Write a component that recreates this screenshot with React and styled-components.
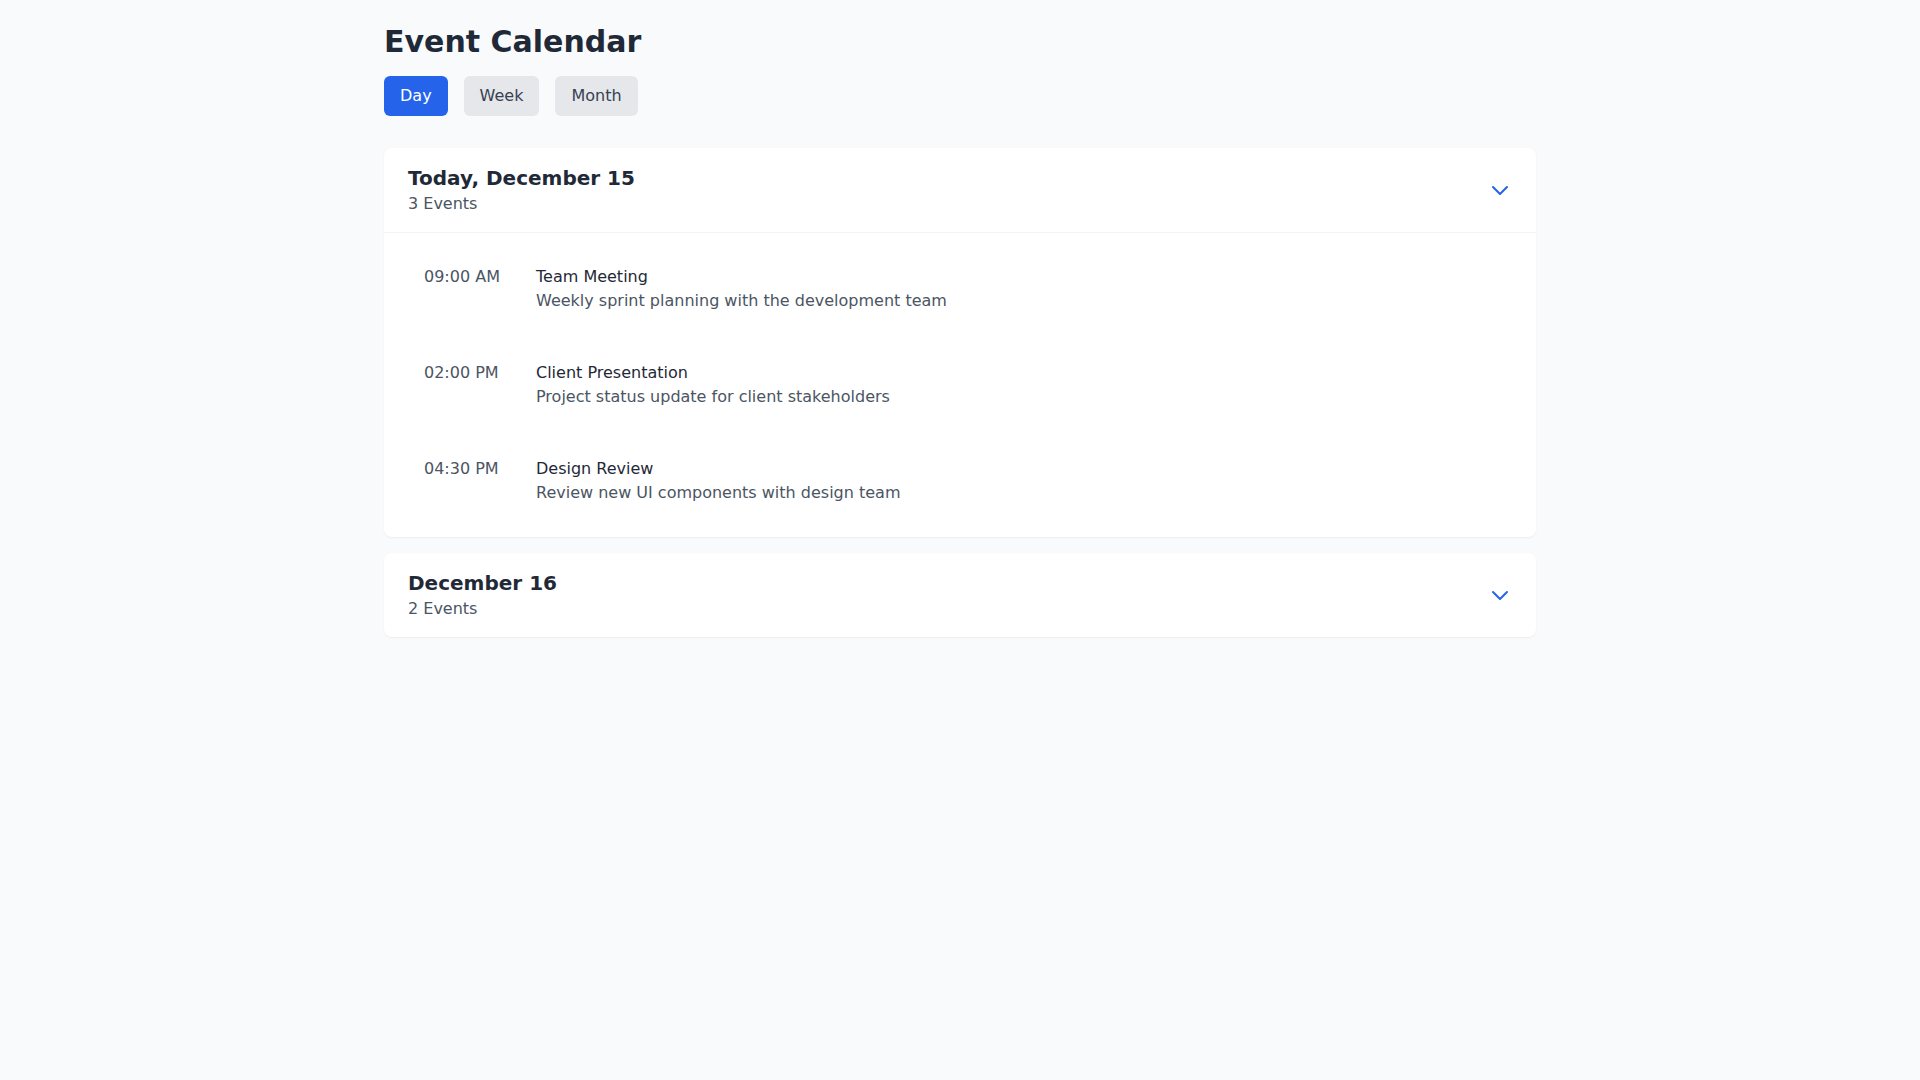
import React, { useState } from "react";
import styled, { createGlobalStyle } from "styled-components";

const days = [
  {
    id: "dec15",
    title: "Today, December 15",
    events: [
      {
        time: "09:00 AM",
        name: "Team Meeting",
        description: "Weekly sprint planning with the development team",
      },
      {
        time: "02:00 PM",
        name: "Client Presentation",
        description: "Project status update for client stakeholders",
      },
      {
        time: "04:30 PM",
        name: "Design Review",
        description: "Review new UI components with design team",
      },
    ],
  },
  {
    id: "dec16",
    title: "December 16",
    events: [
      {
        time: "10:00 AM",
        name: "Product Sync",
        description: "Roadmap alignment with product owners",
      },
      {
        time: "03:00 PM",
        name: "Code Review",
        description: "Review pull requests for the release branch",
      },
    ],
  },
];

const views = ["Day", "Week", "Month"];

function Chevron() {
  return (
    <svg width="24" height="24" viewBox="0 0 24 24" fill="none">
      <path
        d="M19 9l-7 7-7-7"
        stroke="currentColor"
        strokeWidth="2"
        strokeLinecap="round"
        strokeLinejoin="round"
      />
    </svg>
  );
}

function DayCard({ day, open, onToggle }) {
  return (
    <Card>
      <CardHeader onClick={onToggle}>
        <div>
          <DayTitle>{day.title}</DayTitle>
          <DayCount>{day.events.length} Events</DayCount>
        </div>
        <ToggleIcon>
          <Chevron />
        </ToggleIcon>
      </CardHeader>
      {open && (
        <EventList>
          {day.events.map((event) => (
            <EventRow key={event.time}>
              <EventTime>{event.time}</EventTime>
              <div>
                <EventName>{event.name}</EventName>
                <EventDescription>{event.description}</EventDescription>
              </div>
            </EventRow>
          ))}
        </EventList>
      )}
    </Card>
  );
}

export default function App() {
  const [view, setView] = useState("Day");
  const [openDay, setOpenDay] = useState("dec15");

  return (
    <>
      <GlobalStyle />
      <Page>
        <Title>Event Calendar</Title>
        <ViewTabs>
          {views.map((v) => (
            <ViewButton key={v} $active={v === view} onClick={() => setView(v)}>
              {v}
            </ViewButton>
          ))}
        </ViewTabs>
        <DayList>
          {days.map((day) => (
            <DayCard
              key={day.id}
              day={day}
              open={openDay === day.id}
              onToggle={() => setOpenDay(openDay === day.id ? null : day.id)}
            />
          ))}
        </DayList>
      </Page>
    </>
  );
}

const GlobalStyle = createGlobalStyle`
  * {
    box-sizing: border-box;
  }
  body {
    margin: 0;
    background: #f9fafb;
    font-family: "DejaVu Sans", "Noto Sans", sans-serif;
    color: #1f2937;
  }
`;

const Page = styled.div`
  max-width: 1152px;
  margin: 0 auto;
  padding: 24px 0;
  min-height: 100vh;
`;

const Title = styled.h1`
  margin: 0 0 16px;
  font-size: 30px;
  line-height: 36px;
  font-weight: 700;
  color: #1f2937;
`;

const ViewTabs = styled.div`
  display: flex;
  gap: 16px;
  margin-bottom: 32px;
`;

const ViewButton = styled.button`
  padding: 8px 16px;
  border: none;
  border-radius: 6px;
  font-family: inherit;
  font-size: 16px;
  line-height: 24px;
  cursor: pointer;
  background: ${(p) => (p.$active ? "#2563eb" : "#e5e7eb")};
  color: ${(p) => (p.$active ? "#ffffff" : "#374151")};
`;

const DayList = styled.div`
  display: flex;
  flex-direction: column;
  gap: 16px;
`;

const Card = styled.div`
  background: #ffffff;
  border-radius: 8px;
  box-shadow: 0 1px 2px 0 rgba(0, 0, 0, 0.05);
  overflow: hidden;
`;

const CardHeader = styled.div`
  display: flex;
  align-items: center;
  justify-content: space-between;
  padding: 16px 24px;
  cursor: pointer;
`;

const DayTitle = styled.h2`
  margin: 0;
  font-size: 20px;
  line-height: 28px;
  font-weight: 700;
  color: #1f2937;
`;

const DayCount = styled.p`
  margin: 0;
  font-size: 16px;
  line-height: 24px;
  color: #4b5563;
`;

const ToggleIcon = styled.span`
  display: flex;
  color: #2563eb;
`;

const EventList = styled.div`
  display: flex;
  flex-direction: column;
  gap: 16px;
  padding: 16px 24px;
  border-top: 1px solid #f3f4f6;
`;

const EventRow = styled.div`
  display: flex;
  align-items: flex-start;
  gap: 16px;
  padding: 16px;
`;

const EventTime = styled.div`
  width: 96px;
  flex-shrink: 0;
  font-size: 16px;
  line-height: 24px;
  color: #4b5563;
`;

const EventName = styled.p`
  margin: 0;
  font-size: 16px;
  line-height: 24px;
  font-weight: 500;
  color: #1f2937;
`;

const EventDescription = styled.p`
  margin: 0;
  font-size: 16px;
  line-height: 24px;
  color: #4b5563;
`;
